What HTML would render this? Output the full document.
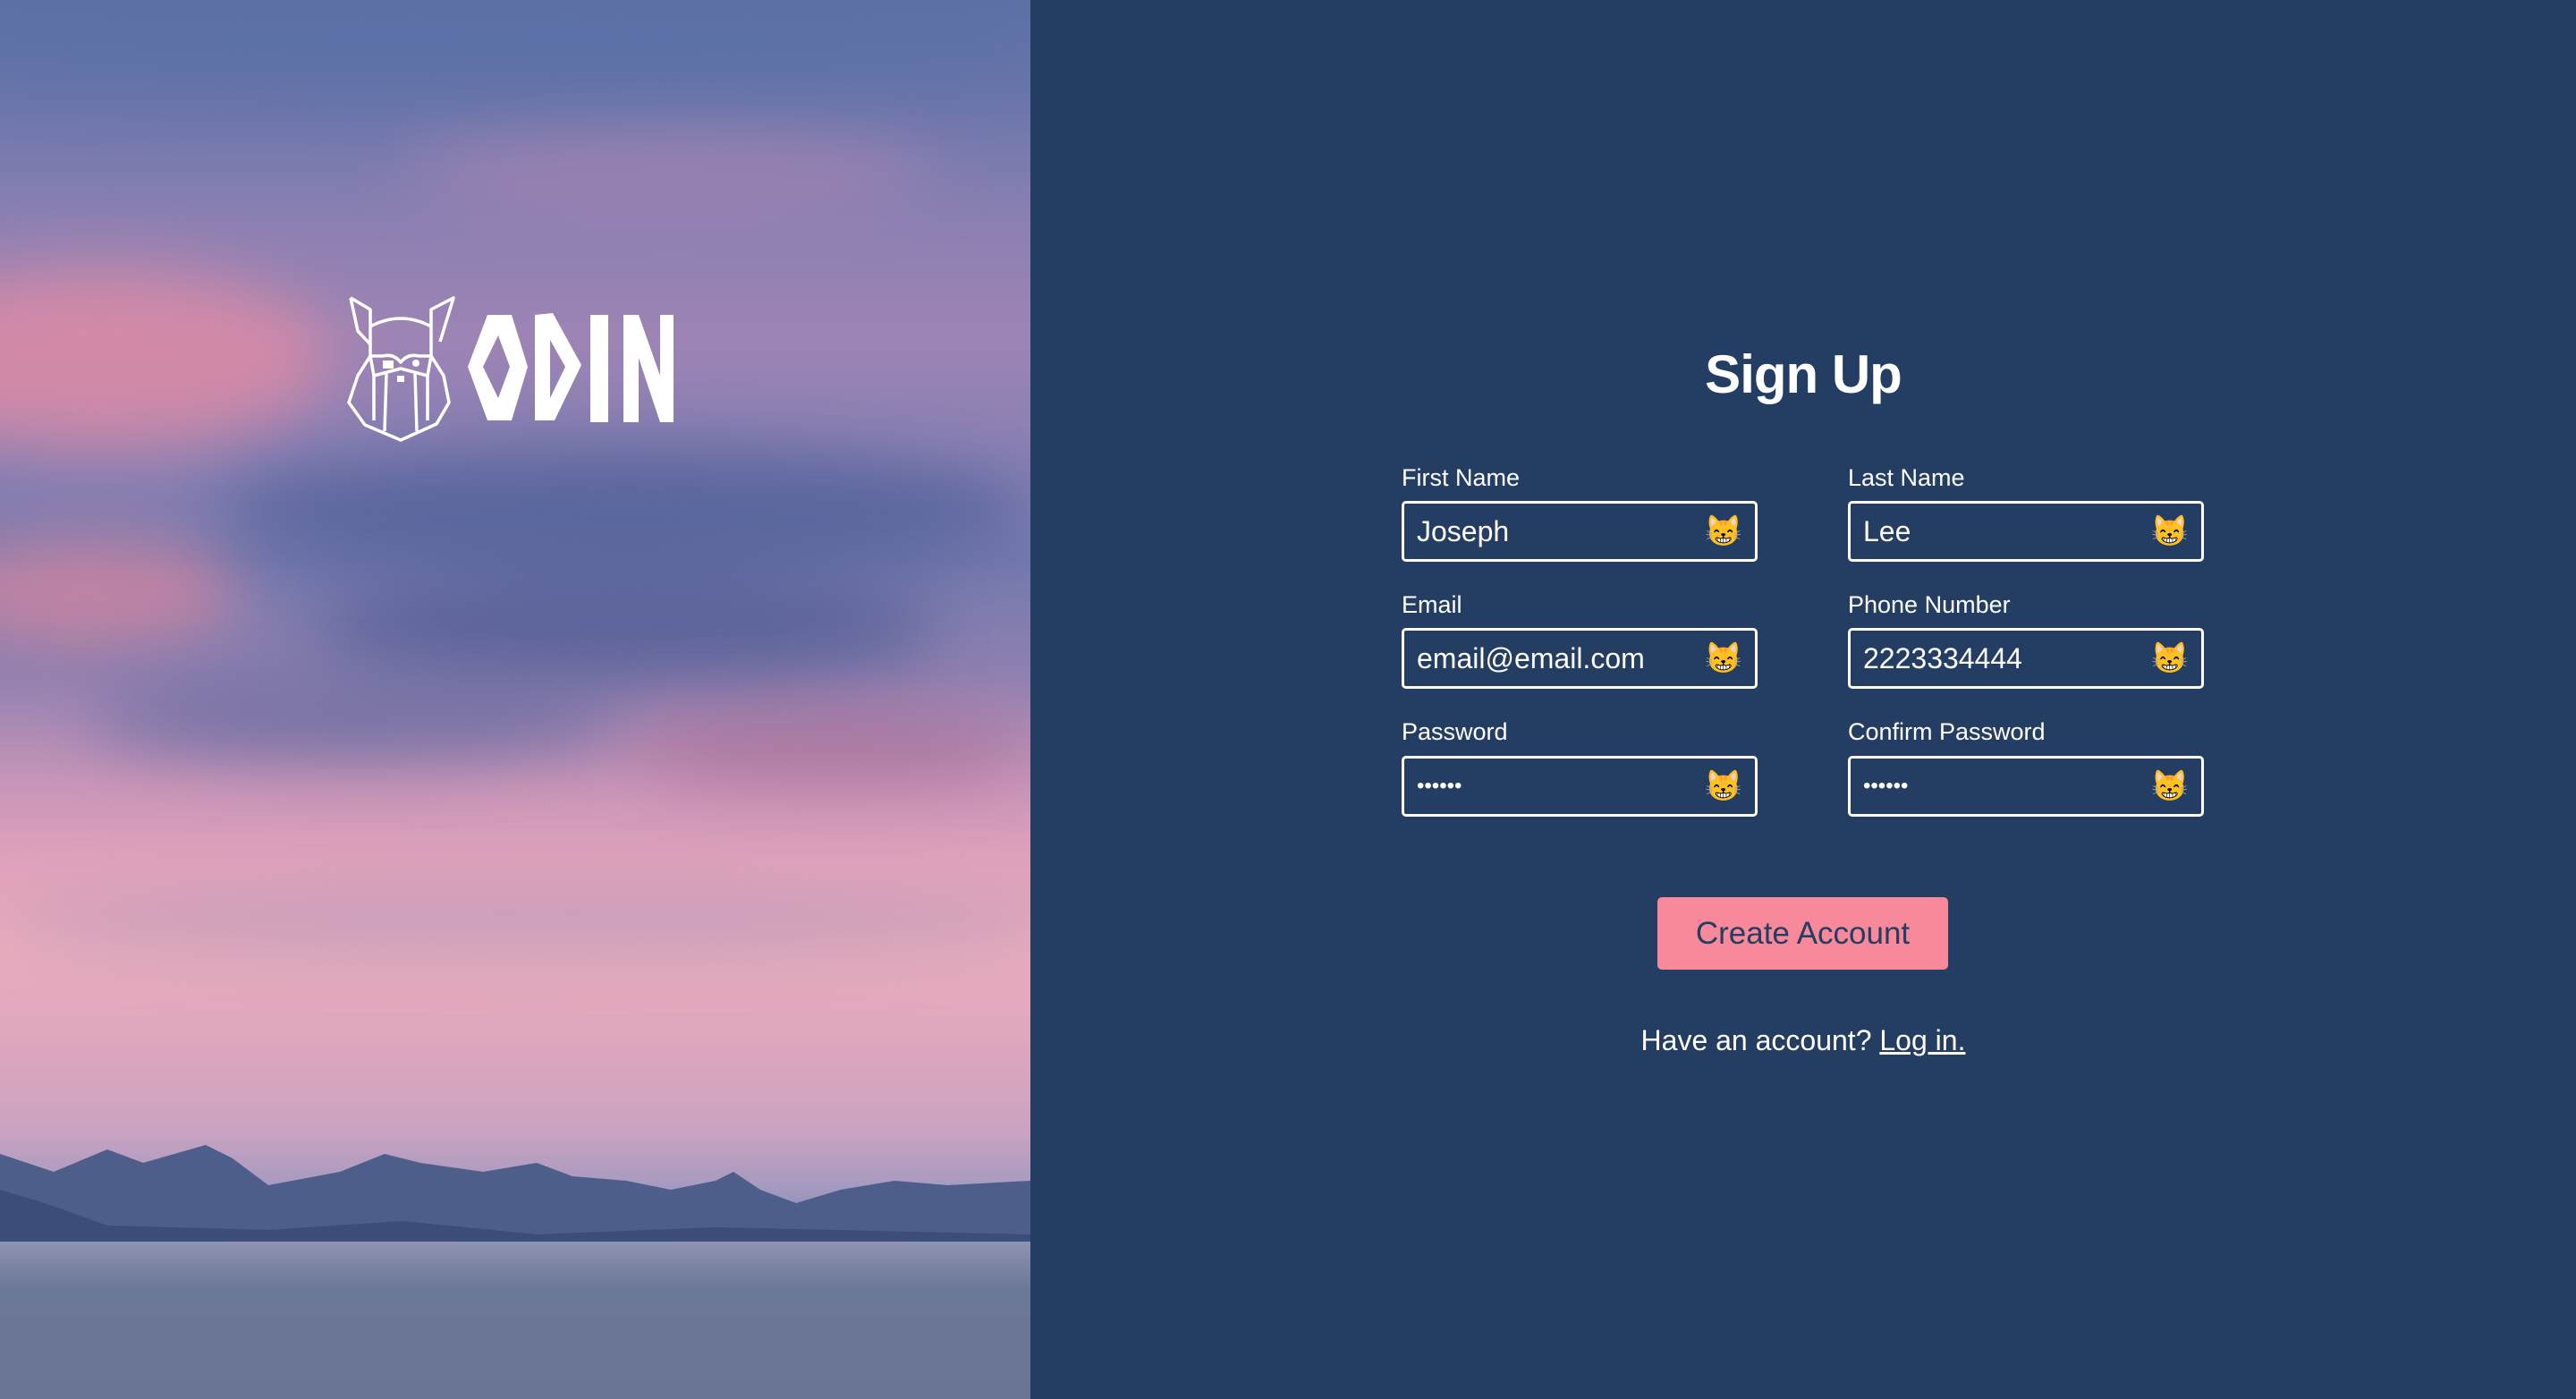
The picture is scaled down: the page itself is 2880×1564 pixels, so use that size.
<!DOCTYPE html>
<html><head><meta charset="utf-8"><style>
*{margin:0;padding:0;box-sizing:border-box}
body{width:2880px;height:1564px;overflow:hidden;background:#243d62;font-family:"Liberation Sans",sans-serif;position:relative}
.left{position:absolute;left:0;top:0;width:1152px;height:1564px;overflow:hidden;
background:linear-gradient(180deg,#5e70a4 0%,#6f77ac 8%,#8c80b2 16%,#9d84b4 24%,#8a80b3 32%,#7479ad 40%,#8e80b0 48%,#c995b8 56%,#e1a3bb 62%,#e8acbd 68%,#dea6bd 75%,#c9a2c2 81%,#a59ac0 85%,#7e88af 88%,#7a86a6 91%,#6b7899 100%)}
.b{position:absolute;border-radius:50%;filter:blur(35px)}
.r{position:absolute;right:0;left:1152px;top:0;bottom:0}
h1{position:absolute;left:0;right:0;text-align:center;top:384px;font-size:60px;color:#fff;font-weight:bold;letter-spacing:-1px}
label{position:absolute;color:#fff;font-size:27px}
.in{position:absolute;width:398px;height:68px;border:3px solid #fff;border-radius:5px;color:#fff;font-size:32px;line-height:62px;padding-left:14px}
.in span{position:absolute;right:14px;top:0;font-size:34px}
.btn{position:absolute;left:701px;top:1003px;width:325px;height:81px;background:#f7899b;border-radius:5px;color:#243d62;font-size:35px;text-align:center;line-height:81px}
.have{position:absolute;left:0;right:0;top:1145px;text-align:center;color:#fff;font-size:32px}
.have u{text-decoration:underline}
</style></head><body>
<div class="left">
<div class="b" style="left:-150px;top:300px;width:520px;height:200px;background:#e08ca5;opacity:.8"></div>
<div class="b" style="left:-80px;top:600px;width:350px;height:120px;background:#df88a0;opacity:.7"></div>
<div class="b" style="left:250px;top:500px;width:900px;height:140px;background:#4f6098;opacity:.75"></div>
<div class="b" style="left:350px;top:640px;width:700px;height:120px;background:#4c5a92;opacity:.7"></div>
<div class="b" style="left:100px;top:760px;width:600px;height:90px;background:#56639a;opacity:.6"></div>
<div class="b" style="left:700px;top:790px;width:450px;height:90px;background:#a0638e;opacity:.5"></div>
<div class="b" style="left:-100px;top:0;width:1300px;height:110px;background:#5670a8;opacity:.6"></div>
<div class="b" style="left:450px;top:150px;width:600px;height:80px;background:#b98ab4;opacity:.5"></div>
<div class="b" style="left:0;top:1000px;width:1200px;height:60px;background:#9b8db5;opacity:.5"></div>
<svg style="position:absolute;left:0;top:0" width="1152" height="1564">
<defs><linearGradient id="s" x1="0" y1="0" x2="0" y2="1"><stop offset="0" stop-color="#8d93b0"/><stop offset=".3" stop-color="#6c7898"/><stop offset="1" stop-color="#6a7595"/></linearGradient></defs>
<path d="M0 1290 L60 1310 L120 1285 L160 1300 L230 1280 L260 1295 L300 1325 L380 1310 L430 1290 L470 1300 L540 1310 L600 1300 L640 1315 L700 1320 L750 1330 L800 1320 L820 1310 L850 1330 L890 1345 L940 1330 L1000 1320 L1060 1325 L1152 1320 L1152 1390 L0 1390 Z" fill="#4e5e8a"/>
<path d="M0 1330 L50 1345 L120 1370 L300 1375 L450 1365 L600 1380 L800 1372 L1152 1380 L1152 1395 L0 1395 Z" fill="#3c4d79"/>
<rect x="0" y="1388" width="1152" height="176" fill="url(#s)"/>
<g fill="none" stroke="#fff" stroke-width="3.5" stroke-linejoin="round">
<path d="M392 333 L414 346 L414 398 L400 420 L390 450 L408 475 L448 492 L488 474 L502 450 L496 420 L482 398 L482 346 L507 333 L492 382"/>
<path d="M392 333 L400 370 L414 385"/>
<path d="M414 365 Q448 347 482 365"/>
<path d="M414 398 L428 398 Q440 395 448 405 Q456 395 468 398 L482 398 L478 420 L448 412 L418 420 Z"/>
<path d="M418 420 L418 470 M478 420 L478 470 M432 418 L430 482 M464 418 L466 482"/>
</g>
<rect x="428" y="403" width="12" height="9" fill="#fff"/><circle cx="465" cy="406" r="4" fill="#fff"/>
<rect x="444" y="420" width="8" height="7" fill="#fff"/>
<g fill="#fff">
<path d="M545 352 L572 352 L590 410 L572 470 L545 470 L523 410 Z M557 375 L540 410 L557 445 L570 410 Z" fill-rule="evenodd"/>
<path d="M598 352 L618 350 L650 408 L620 470 L598 470 Z M615 380 L615 445 L632 410 Z" fill-rule="evenodd"/>
<rect x="660" y="352" width="20" height="120"/>
<path d="M697 352 L714 352 L738 420 L738 352 L753 352 L753 472 L738 472 L714 400 L714 472 L697 472 Z"/>
</g>
</svg>
</div>
<div class="r">
<h1>Sign Up</h1>
<label style="left:415px;top:519px">First Name</label>
<label style="left:914px;top:519px">Last Name</label>
<div class="in" style="left:415px;top:560px">Joseph<span>😸</span></div>
<div class="in" style="left:914px;top:560px">Lee<span>😸</span></div>
<label style="left:415px;top:661px">Email</label>
<label style="left:914px;top:661px">Phone Number</label>
<div class="in" style="left:415px;top:702px">email@email.com<span>😸</span></div>
<div class="in" style="left:914px;top:702px">2223334444<span>😸</span></div>
<label style="left:415px;top:803px">Password</label>
<label style="left:914px;top:803px">Confirm Password</label>
<div class="in" style="left:415px;top:845px;font-size:24px">••••••<span>😸</span></div>
<div class="in" style="left:914px;top:845px;font-size:24px">••••••<span>😸</span></div>
<div class="btn">Create Account</div>
<div class="have">Have an account? <u>Log in.</u></div>
</div>
</body></html>
